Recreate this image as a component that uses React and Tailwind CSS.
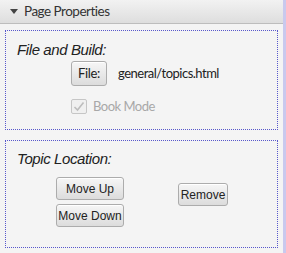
import React from "react";

const btn =
  "flex items-center justify-center rounded-[3px] border border-[#acacac] bg-gradient-to-b from-[#f6f6f6] to-[#dcdcdc] text-[#222] shadow-[inset_0_1px_0_#fff]";

const App = () => {
  return (
    <div className="flex h-[253px] w-[286px] bg-[#f4f4f4] font-['Lato',sans-serif]">
      <div className="flex flex-1 flex-col">
        {/* Header */}
        <div className="flex h-[24px] items-center border-b border-[#bdbdbd] bg-gradient-to-b from-[#f2f2f2] to-[#dedede] pl-[10px]">
          <svg width="8" height="6" viewBox="0 0 8 6" className="mr-[6px]">
            <path d="M0 0 L8 0 L4 5 Z" fill="#444" />
          </svg>
          <span className="text-[13.5px] leading-none tracking-[-0.5px] text-[#333]">Page Properties</span>
        </div>

        {/* File and Build */}
        <div className="mx-[5px] mt-[6px] h-[100px] border border-dotted border-[#5858cc] pl-[11px] pt-[9px]">
          <div className="font-['Liberation_Sans',sans-serif] text-[15px] italic leading-[20px] tracking-[-0.4px] text-[#222]">
            File and Build:
          </div>
          <div className="ml-[54px] mt-[1px] flex items-center">
            <button className={`${btn} h-[25px] w-[36px] text-[13px] tracking-[-0.3px]`}>File:</button>
            <span className="ml-[11px] text-[13px] tracking-[-0.5px] text-[#222]">general/topics.html</span>
          </div>
          <div className="ml-[54px] mt-[11px] flex items-center">
            <div className="flex h-[15px] w-[16px] items-center justify-center rounded-[2px] border border-[#c6c6c6] bg-[#f0f0f0]">
              <svg width="12" height="11" viewBox="0 0 12 11">
                <path d="M1.5 6 L4.5 9 L10.5 1.5" fill="none" stroke="#bdbdbd" strokeWidth="1.6" />
              </svg>
            </div>
            <span className="ml-[6px] text-[13px] tracking-[-0.5px] text-[#a8a8a8]">Book Mode</span>
          </div>
        </div>

        {/* Topic Location */}
        <div className="mx-[5px] mt-[10px] h-[108px] border border-dotted border-[#5858cc] pl-[11px] pt-[8px]">
          <div className="font-['Liberation_Sans',sans-serif] text-[15px] italic leading-[20px] tracking-[-0.4px] text-[#222]">
            Topic Location:
          </div>
          <div className="ml-[39px] mt-[8px] flex items-start font-['Liberation_Sans',sans-serif] text-[12px]">
            <div className="flex flex-col gap-[4px]">
              <button className={`${btn} h-[23px] w-[68px]`}>Move Up</button>
              <button className={`${btn} h-[23px] w-[68px]`}>Move Down</button>
            </div>
            <button className={`${btn} ml-[54px] mt-[6px] h-[23px] w-[50px]`}>Remove</button>
          </div>
        </div>
      </div>
      <div className="w-[3px] bg-[#c9c9ee]" />
    </div>
  );
};

export default App;
